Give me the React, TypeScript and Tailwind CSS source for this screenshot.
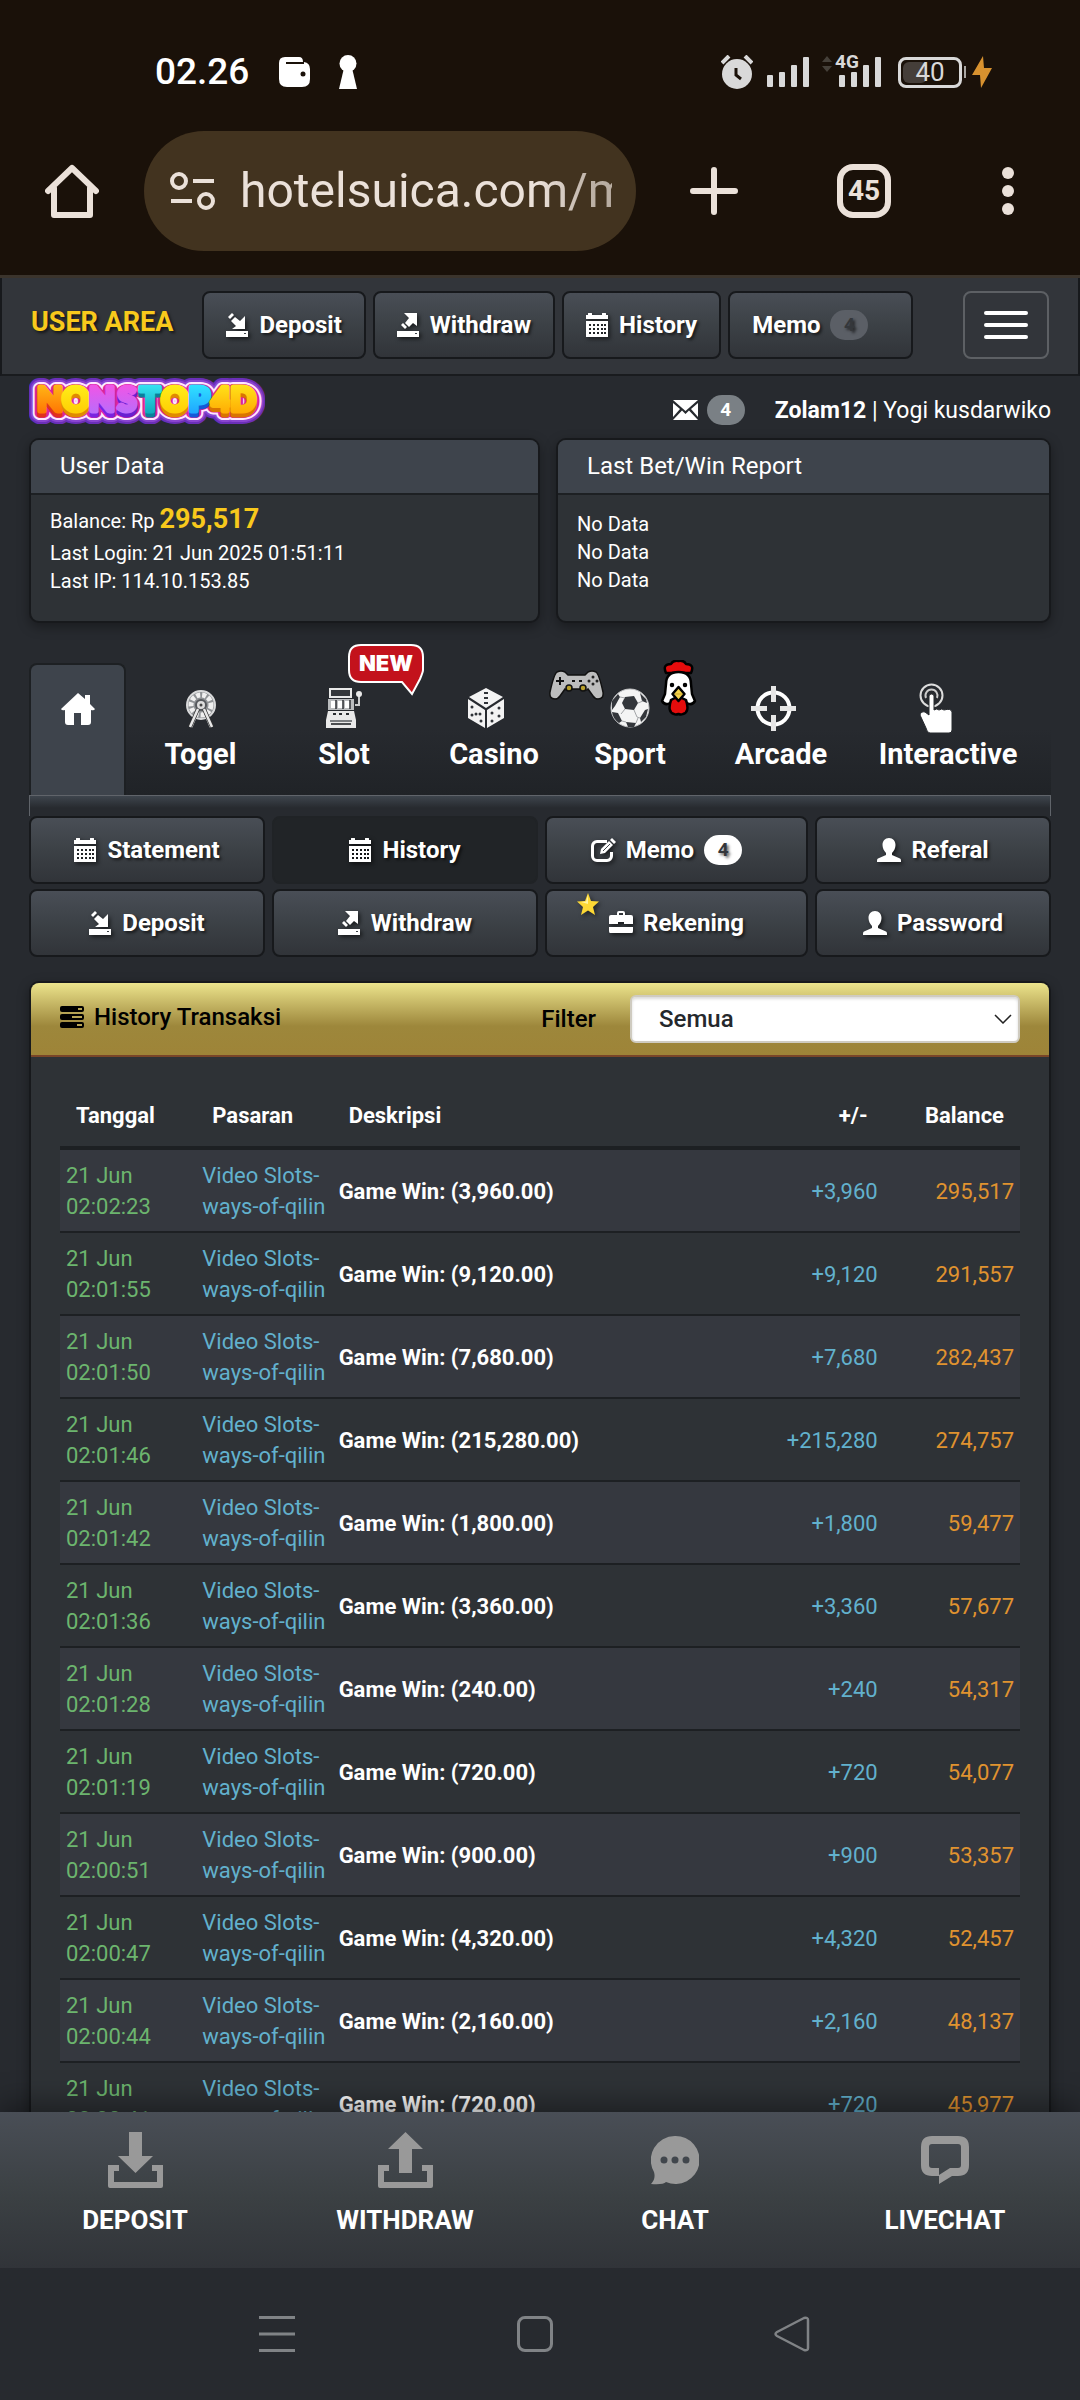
import type { ReactNode } from 'react';
import clsx from 'clsx';

const TRANSACTIONS = [
  { time: '02:02:23', amount: '3,960', balance: '295,517' },
  { time: '02:01:55', amount: '9,120', balance: '291,557' },
  { time: '02:01:50', amount: '7,680', balance: '282,437' },
  { time: '02:01:46', amount: '215,280', balance: '274,757' },
  { time: '02:01:42', amount: '1,800', balance: '59,477' },
  { time: '02:01:36', amount: '3,360', balance: '57,677' },
  { time: '02:01:28', amount: '240', balance: '54,317' },
  { time: '02:01:19', amount: '720', balance: '54,077' },
  { time: '02:00:51', amount: '900', balance: '53,357' },
  { time: '02:00:47', amount: '4,320', balance: '52,457' },
  { time: '02:00:44', amount: '2,160', balance: '48,137' },
  { time: '02:00:41', amount: '720', balance: '45,977' },
];

const LOGO_LETTERS = [
  { char: 'N', x: 20, fill: 'url(#orange)', base: '#e0301e' },
  { char: 'O', x: 46, fill: 'url(#yellow)', base: '#e08a00' },
  { char: 'N', x: 72, fill: 'url(#violet)', base: '#7a22e0' },
  { char: 'S', x: 97, fill: 'url(#violet)', base: '#6a1fd0' },
  { char: 'T', x: 120, fill: 'url(#teal)', base: '#0a7f9a' },
  { char: 'O', x: 145, fill: 'url(#yellow)', base: '#e08a00' },
  { char: 'P', x: 169, fill: 'url(#sky)', base: '#1559d8' },
  { char: '4', x: 191, fill: 'url(#gold)', base: '#d97400' },
  { char: 'D', x: 213, fill: 'url(#gold)', base: '#d97400' },
];

/* ---------- Icons ---------- */

function DepositIcon() {
  return (
    <svg className="w-[22px] h-6 drop-shadow-[2px_2px_2px_rgba(0,0,0,0.6)]" viewBox="0 0 22 24" fill="currentColor">
      <path d="M0 18h22v6H0z" />
      <path d="M18 20h2v1h-2z" fill="#3e4349" />
      <path d="M19 3v13H6l4-3-5-5 4-4 5 4z" />
      <path d="M2 4l4-4 2 2-4 4z" />
    </svg>
  );
}

function WithdrawIcon() {
  return (
    <svg className="w-[22px] h-6 drop-shadow-[2px_2px_2px_rgba(0,0,0,0.6)]" viewBox="0 0 22 24" fill="currentColor">
      <path d="M0 18h22v6H0z" />
      <path d="M18 20h2v1h-2z" fill="#3e4349" />
      <path d="M7 0h13v13l-4-3-4 4-4-4 4-5z" />
      <path d="M4 12l2-2 4 4-2 2z" />
    </svg>
  );
}

function CalendarIcon() {
  return (
    <svg className="w-[22px] h-6 drop-shadow-[2px_2px_2px_rgba(0,0,0,0.6)]" viewBox="0 0 22 24" fill="currentColor">
      <path d="M0 2h2V1a2 2 0 0 1 4 0v1h10V1a2 2 0 0 1 4 0v1h2v4H0z" />
      <path
        fillRule="evenodd"
        d="M0 8h22v16H0zM3 11v2h2v-2zM7 11v2h2v-2zM11 11v2h2v-2zM15 11v2h2v-2zM18 11v2h2v-2zM3 15v2h2v-2zM7 15v2h2v-2zM11 15v2h2v-2zM15 15v2h2v-2zM18 15v2h2v-2zM3 19v2h2v-2zM7 19v2h2v-2zM11 19v2h2v-2zM15 19v2h2v-2zM18 19v2h2v-2z"
      />
    </svg>
  );
}

function EditIcon() {
  return (
    <svg className="w-[25px] h-6 drop-shadow-[2px_2px_2px_rgba(0,0,0,0.6)]" viewBox="0 0 25 24">
      <path d="M16 3.500H6a4.500 4.500 0 0 0-4.500 4.500v10A4.500 4.500 0 0 0 6 22.500h10a4.500 4.500 0 0 0 4.500-4.500v-4" fill="none" stroke="currentColor" strokeWidth="3" />
      <path d="M9 16l1-5 8-8 4 4-8 8zM19 2l2-2 4 4-2 2z" fill="currentColor" />
      <path d="M12 13l7-7" stroke="#43484e" strokeWidth="1" />
    </svg>
  );
}

function UserIcon() {
  return (
    <svg className="w-6 h-6 drop-shadow-[2px_2px_2px_rgba(0,0,0,0.6)]" viewBox="0 0 24 24" fill="currentColor">
      <path d="M12 0c4 0 6.500 3 6.500 7 0 3-1.500 6-3.500 8v2l8 3.500c1 .5 1 1.500 1 3.500H0c0-2 0-3 1-3.500L9 17v-2C7 13 5.500 10 5.500 7c0-4 2.500-7 6.500-7z" />
    </svg>
  );
}

function BriefcaseIcon() {
  return (
    <svg className="w-6 h-6 drop-shadow-[2px_2px_2px_rgba(0,0,0,0.6)]" viewBox="0 0 24 24" fill="currentColor">
      <path d="M8 4V2q0-2 2-2h4q2 0 2 2v2h6q2 0 2 2v7h-9v-2H9v2H0V6q0-2 2-2zM10 2v2h4V2z" fillRule="evenodd" />
      <path d="M0 16h24v4q0 2-1 2H1q-1 0-1-2z" />
    </svg>
  );
}

function TogelIcon() {
  return (
    <svg className="w-[30px] h-[39px]" viewBox="0 0 30 39" fill="none">
      <path d="M14 17 5 38M16 17l9 21" stroke="#d5d7d9" strokeWidth="3" />
      <circle cx="15" cy="16" r="14" fill="#8f9295" stroke="#d9dadb" strokeWidth="2" />
      <circle cx="15" cy="16" r="10" stroke="#f0f0f0" strokeWidth="5" strokeDasharray="4 2" />
      <circle cx="15" cy="16" r="5" fill="#ddd" stroke="#55585c" strokeWidth="2" />
      <circle cx="15" cy="16" r="1.500" fill="#444" />
      <path d="M12 20 4 38M18 20l8 18" stroke="#333" strokeWidth="4" />
      <path d="M12 20 4 38M18 20l8 18" stroke="#e8e8e8" strokeWidth="2.500" />
    </svg>
  );
}

function SlotIcon() {
  return (
    <svg className="w-9 h-10" viewBox="0 0 36 40" fill="#e9e9e9">
      <path d="M3 0h23v10H3z" />
      <path d="M5 2h19v6H5z" fill="#34373b" />
      <path d="M2 11h26v11H2z" fill="#b9bbbd" />
      <path d="M5 13h5v7H5zM12 13h5v7h-5zM19 13h5v7h-5z" fill="#fff" />
      <path d="M10 12v9M17 12v9M24 12v9" stroke="#2e3135" strokeWidth="1.500" />
      <path d="M2 23h26l2 9v8H0v-8z" />
      <path d="M7 25h3v2H7zM13 25h3v2h-3zM20 25h3v2h-3z" fill="#292c30" />
      <path d="M4 32h22v2H4z" fill="#7b7e81" />
      <path d="M5 35h20v2H5z" fill="#4a4d50" />
      <path d="M29 17h4V8" fill="none" stroke="#c9cacb" strokeWidth="2" />
      <circle cx="33" cy="6" r="3" />
    </svg>
  );
}

function DiceIcon() {
  return (
    <svg className="w-9 h-10" viewBox="0 0 36 40" fill="#f3f3f3">
      <path d="M18 0l17 9-17 11L1 9z" />
      <path d="M0 11l17 11v18L0 30zM36 11L19 22v18l17-10z" />
      <g fill="#303338">
        <rect x="16" y="4" width="4" height="2" />
        <rect x="16" y="9" width="4" height="2" />
        <rect x="16" y="14" width="4" height="2" />
        <circle cx="4" cy="19" r="1.500" />
        <circle cx="4" cy="27" r="1.500" />
        <circle cx="8" cy="26" r="1.500" />
        <circle cx="12" cy="26" r="1.500" />
        <circle cx="13" cy="33" r="1.500" />
        <circle cx="24" cy="25" r="1.500" />
        <circle cx="31" cy="20" r="1.500" />
        <circle cx="24" cy="33" r="1.500" />
        <circle cx="31" cy="28" r="1.500" />
      </g>
    </svg>
  );
}

function BallIcon() {
  return (
    <svg className="w-10 h-10" viewBox="0 0 40 40">
      <circle cx="20" cy="20" r="19" fill="#f4f4f4" stroke="#c5c6c8" />
      <g fill="#33363b">
        <path d="M15 9l9-1 4 7-4 7-9-1-3-6z" />
        <path d="M2 13l6-7 2 3-5 9-3 4zM30 5l6 6 1 4-5-2zM2 24l6 1 4 8-3 2q-6-4-7-11zM16 34l10 1-2 4h-6zM38 21l-2 8-5 5-1-4 5-8z" />
      </g>
      <path d="M10 9l5 1M28 15l5-2M24 22l3 7 3 1M15 21l-4 5M26 35l2-5M12 33l4 1" stroke="#a2a4a7" strokeWidth="1" fill="none" />
    </svg>
  );
}

function GamepadIcon() {
  return (
    <svg className="w-[57px] h-[30px]" viewBox="0 0 57 30">
      <path
        d="M9 2q4-2 8 0l3 3h17l3-3q4-2 8 0 3 2 7 20 1 7-5 7-3 0-5-3l-5-7q-3 3-6 0H23q-3 3-6 0l-5 7q-2 3-5 3-6 0-5-7Q6 4 9 2z"
        fill="#bdbdbd"
        stroke="#111"
        strokeWidth="1.500"
      />
      <path d="M12 7v8M8 11h8" stroke="#111" strokeWidth="2" />
      <path d="M24 11h3M31 11h3" stroke="#111" strokeWidth="2" />
      <g fill="#222">
        <circle cx="45" cy="7" r="1.500" />
        <circle cx="45" cy="14" r="1.500" />
        <circle cx="41" cy="11" r="1.500" />
        <circle cx="49" cy="11" r="1.500" />
      </g>
      <circle cx="21" cy="18" r="3" fill="#b8a02c" stroke="#111" strokeWidth="1.500" />
      <circle cx="35" cy="18" r="3" fill="#b8a02c" stroke="#111" strokeWidth="1.500" />
    </svg>
  );
}

function RoosterIcon() {
  return (
    <svg className="w-[37px] h-14" viewBox="0 0 37 56" stroke="#000" strokeWidth="2.500" strokeLinejoin="round">
      <path d="M6 13q-4-9 5-9 2-4 7.500-3Q24 0 26 4q9 0 5 9z" fill="#e50c0c" />
      <path d="M6 24q0-12 12.500-12T31 24l1 10 3 7q-3 5-8 2H10q-5 3-8-2l3-7z" fill="#fff" />
      <path d="M11 40q7-5 15 0 4 12-3 14-2 1-4.500 0-3 1-4.500 0-7-2-3-14z" fill="#e50c0c" />
      <path d="M18.500 27l6 7-6 7-6-7z" fill="#f5d34a" />
      <path d="M15 34h7" stroke="#caa42c" strokeWidth="1" />
      <circle cx="12" cy="25" r="1" />
      <circle cx="25" cy="25" r="1" />
    </svg>
  );
}

function CrosshairIcon() {
  return (
    <svg className="w-[45px] h-[45px]" viewBox="0 0 45 45" fill="none">
      <circle cx="22.500" cy="22.500" r="16" stroke="#fff" strokeWidth="4" />
      <path d="M22.500 0v16M22.500 29v16M0 22.500h16M29 22.500h16" stroke="#e6e6e6" strokeWidth="5" />
    </svg>
  );
}

function TapIcon() {
  return (
    <svg className="w-[34px] h-[50px]" viewBox="0 0 34 50">
      <circle cx="12.500" cy="12.500" r="11" fill="none" stroke="#ddd" strokeWidth="2" />
      <path d="M7 15a6 6 0 1 1 11 0" fill="none" stroke="#ccc" strokeWidth="2" />
      <path d="M10 13q0-2 2.500-2t2.500 2v14q3-2 5 0 3-2 5 0 7-2 8 2v18q0 3-3 3H11q-3 0-4-5L1 32q1-4 5-3l4 3z" fill="#fff" stroke="#272a2f" strokeWidth="1" />
    </svg>
  );
}

function SignalBars() {
  return (
    <svg className="w-[43px] h-[30px]" viewBox="0 0 43 30" fill="#d9d9d9">
      <rect x="0" y="18" width="6" height="12" rx="1" />
      <rect x="12" y="15" width="6" height="15" rx="1" />
      <rect x="24" y="8" width="6" height="22" rx="1" />
      <rect x="36" y="0" width="6" height="30" rx="1" />
    </svg>
  );
}

function Logo() {
  return (
    <svg className="w-[236px] h-[51px] shrink-0" viewBox="-1 0 236 51" role="img" aria-label="NONSTOP4D">
      <defs>
        <linearGradient id="orange" x1="0" y1="0" x2="0" y2="1">
          <stop offset="0" stopColor="#ffc61a" />
          <stop offset="1" stopColor="#ff6a00" />
        </linearGradient>
        <linearGradient id="yellow" x1="0" y1="0" x2="0" y2="1">
          <stop offset="0" stopColor="#fff61e" />
          <stop offset="1" stopColor="#ffc800" />
        </linearGradient>
        <linearGradient id="violet" x1="0" y1="0" x2="0" y2="1">
          <stop offset="0" stopColor="#ff4fe0" />
          <stop offset="1" stopColor="#b070ff" />
        </linearGradient>
        <linearGradient id="teal" x1="0" y1="0" x2="0" y2="1">
          <stop offset="0" stopColor="#3ff0ff" />
          <stop offset="1" stopColor="#0aa0b4" />
        </linearGradient>
        <linearGradient id="sky" x1="0" y1="0" x2="0" y2="1">
          <stop offset="0" stopColor="#35f0ff" />
          <stop offset="1" stopColor="#1c9cff" />
        </linearGradient>
        <linearGradient id="gold" x1="0" y1="0" x2="0" y2="1">
          <stop offset="0" stopColor="#fff01e" />
          <stop offset="1" stopColor="#ffa200" />
        </linearGradient>
      </defs>
      <g fontFamily="Lato" fontWeight="900" fontSize="33" textAnchor="middle" strokeLinejoin="round">
        {[
          { color: '#6b2fb8', width: 22 },
          { color: '#8a45d0', width: 18 },
          { color: '#ffe6ff', width: 14 },
          { color: '#d9259b', width: 10 },
        ].map((layer) => (
          <g key={layer.color} fill={layer.color} stroke={layer.color} strokeWidth={layer.width} aria-hidden="true">
            {LOGO_LETTERS.map((l) => (
              <text key={l.x} x={l.x} y="37">{l.char}</text>
            ))}
          </g>
        ))}
        {LOGO_LETTERS.map((l) => (
          <g key={l.x} strokeWidth="5">
            <text x={l.x} y="39" fill={l.base} stroke={l.base} aria-hidden="true">{l.char}</text>
            <text x={l.x} y="35" fill={l.fill} stroke={l.fill}>{l.char}</text>
          </g>
        ))}
      </g>
    </svg>
  );
}

/* ---------- Browser chrome ---------- */

function StatusBar() {
  return (
    <div className="flex items-center h-9 pl-[155px] pr-[88px] text-white">
      <span className="text-[37px] leading-9 font-medium">02.26</span>
      <svg className="ml-[30px] w-8 h-[30px]" viewBox="0 0 32 30">
        <path d="M6 0h14q4 0 4 5h1q6 1 6 7v10q0 8-8 8H8q-8 0-8-8V6q0-6 6-6z" fill="#fff" />
        <path d="M7 6h18" stroke="#1a1109" strokeWidth="2" />
        <circle cx="24" cy="17" r="2.500" fill="#1a1109" />
      </svg>
      <svg className="ml-7 w-[18px] h-[34px]" viewBox="0 0 18 34" fill="#fff">
        <circle cx="9" cy="8.500" r="8.500" />
        <path d="M5 13h8l5 21H0z" />
      </svg>
      <div className="ml-auto flex items-center">
        <svg className="w-8 h-[34px]" viewBox="0 0 32 34">
          <circle cx="16" cy="19" r="15" fill="#d9d9d9" />
          <path d="M1 8l7-7M31 8l-7-7" stroke="#d9d9d9" strokeWidth="4" />
          <path d="M15 13v7l5 4" fill="none" stroke="#1a1109" strokeWidth="3" />
        </svg>
        <span className="ml-3.5"><SignalBars /></span>
        <svg className="ml-3 mb-4 w-[10px] h-4" viewBox="0 0 10 16" fill="#454039">
          <path d="M0 6l5-6 5 6zM0 10l5 6 5-6z" />
        </svg>
        <div className="relative ml-[7px]">
          <SignalBars />
          <span className="absolute -top-1 -left-1 bg-[#1a1109] text-[19px] leading-[18px] font-bold text-[#d9d9d9]">4G</span>
        </div>
        <div className="ml-4 flex items-center">
          <div className="relative flex items-center justify-center w-16 h-[31px] rounded-lg border-3 border-[#d9d9d9]">
            <div className="absolute inset-y-0.5 left-0.5 w-6 rounded-md bg-[#453e39]" />
            <span className="relative text-[26px] leading-6 text-[#d9d9d9]">40</span>
          </div>
          <span className="ml-0.5 w-0.5 h-3 bg-[#a9a6a2]" />
        </div>
        <svg className="ml-1.5 w-5 h-8" viewBox="0 0 20 32" fill="#d8922f">
          <path d="M11 0L0 19h8l1 13L20 12h-8z" />
        </svg>
      </div>
    </div>
  );
}

function BrowserToolbar() {
  return (
    <div className="flex items-center h-[120px] mt-[41px] pl-[45px] pr-[66px] text-[#ebe1d9]">
      <button aria-label="Home">
        <svg className="w-[54px] h-[54px]" viewBox="0 0 54 54" fill="none" stroke="currentColor" strokeWidth="6" strokeLinejoin="round" strokeLinecap="round">
          <path d="M3 27L27 4l24 23M9 24v27h36V24" />
        </svg>
      </button>
      <label className="ml-[45px] flex flex-1 min-w-0 items-center h-full pl-[26px] pr-6 rounded-full bg-[#42331f]">
        <svg className="shrink-0 w-[46px] h-[38px]" viewBox="0 0 46 38" fill="none" stroke="currentColor" strokeWidth="4">
          <circle cx="9" cy="9" r="7" />
          <path d="M23 9h21M1 29h21" />
          <circle cx="36" cy="29" r="7" />
        </svg>
        <input
          aria-label="Address"
          readOnly
          value="hotelsuica.com/member"
          className="ml-6 flex-1 min-w-0 text-[48px] leading-[60px] outline-none [mask-image:linear-gradient(to_right,black_80%,rgba(0,0,0,0.7)_96%)]"
        />
      </label>
      <button aria-label="New tab" className="ml-[54px]">
        <svg className="w-12 h-12" viewBox="0 0 48 48" stroke="currentColor" strokeWidth="6" strokeLinecap="round">
          <path d="M24 3v42M3 24h42" />
        </svg>
      </button>
      <button className="ml-[99px] w-[54px] h-[54px] rounded-2xl border-6 border-current text-[28px] leading-7 font-bold">45</button>
      <button aria-label="Menu" className="ml-[111px] flex flex-col gap-1.5">
        <span className="size-3 rounded-full bg-current" />
        <span className="size-3 rounded-full bg-current" />
        <span className="size-3 rounded-full bg-current" />
      </button>
    </div>
  );
}

/* ---------- Page ---------- */

function MenuButton({ children, active, className }: { children: ReactNode; active?: boolean; className?: string }) {
  return (
    <button
      className={clsx(
        'relative flex items-center h-[68px] rounded-lg border-2 text-[24px] leading-[30px] font-bold text-white [text-shadow:2px_2px_3px_rgba(0,0,0,0.6)]',
        active ? 'border-[#202326] bg-[#212427]' : 'border-[#17191c] bg-linear-to-b from-[#494e56] via-[#3c4146] to-[#313439]',
        className,
      )}
    >
      {children}
    </button>
  );
}

function Badge({ children, className }: { children: ReactNode; className?: string }) {
  return (
    <span className={clsx('flex items-center justify-center w-[38px] h-[30px] rounded-full text-[19px] leading-[30px] font-bold', className)}>
      {children}
    </span>
  );
}

function TopNav() {
  return (
    <nav className="flex items-center gap-[7px] pt-[13px] pb-[15px] pl-[29px] pr-[29px] border-x-2 border-b-2 border-x-[#17191c] border-b-[#191b1e] bg-[#32353a]">
      <a href="#" className="mr-[22px] mb-1.5 text-[27px] leading-8 font-bold text-[#f8c91c] [text-shadow:2px_2px_3px_rgba(0,0,0,0.6)]">
        USER AREA
      </a>
      <MenuButton className="px-[22px] gap-[11px]"><DepositIcon />Deposit</MenuButton>
      <MenuButton className="px-[22px] gap-[11px]"><WithdrawIcon />Withdraw</MenuButton>
      <MenuButton className="px-[22px] gap-[11px]"><CalendarIcon />History</MenuButton>
      <MenuButton className="pl-[22px] pr-[43px] gap-2.5">
        Memo
        <Badge className="bg-[#5b5f66] text-[#34373b]">4</Badge>
      </MenuButton>
      <button aria-label="Toggle navigation" className="ml-auto flex flex-col items-center justify-center gap-2 w-[86px] h-[68px] rounded-lg border-2 border-[#5d6064]">
        <span className="w-11 h-1 rounded-full bg-white" />
        <span className="w-11 h-1 rounded-full bg-white" />
        <span className="w-11 h-1 rounded-full bg-white" />
      </button>
    </nav>
  );
}

function InfoCard({ title, children }: { title: string; children: ReactNode }) {
  return (
    <section className="h-[185px] rounded-[10px] border-2 border-[#17191c] bg-[#2e3236] shadow-[0_4px_12px_rgba(0,0,0,0.35)] overflow-hidden">
      <h2 className="h-[55px] px-[29px] border-b-2 border-[#1d2023] bg-[#3e444c] text-[24px] leading-[52px]">{title}</h2>
      {children}
    </section>
  );
}

function GameTab({ label, children }: { label: string; children: ReactNode }) {
  return (
    <a href="#" className="flex flex-col items-center h-full">
      <span className="relative flex items-center justify-center mt-[19px] h-[52px]">{children}</span>
      <span className="mt-1 text-[29px] leading-8 font-bold">{label}</span>
    </a>
  );
}

function GameTabs() {
  return (
    <nav className="mt-10">
      <div className="grid grid-cols-[97fr_149fr_138fr_162fr_110fr_192fr_142fr_32fr] h-[132px] bg-linear-to-b from-[#272a2f] from-50% to-[#202327]">
        <a href="#" aria-label="Home" className="flex justify-center pt-7 rounded-t-lg border-2 border-b-0 border-[#1d2023] bg-[#3e444c]">
          <svg className="w-[34px] h-8" viewBox="0 0 34 32" fill="#fff">
            <path d="M17 0l7 6V2h5v9l5 5q-1 2-4 1v12q0 3-3 3h-7V20h-7v12H7q-3 0-3-3V17q-3 1-4-1z" />
          </svg>
        </a>
        <GameTab label="Togel"><TogelIcon /></GameTab>
        <GameTab label="Slot">
          <SlotIcon />
          <span className="absolute left-[22px] -top-[38px] w-[76px] h-[52px]">
            <svg className="absolute inset-0" viewBox="0 0 76 52">
              <path d="M13 1h50q12 0 12 12v13q0 2-3 9L64 50 54 38H13Q1 38 1 26V13Q1 1 13 1z" fill="#c3121c" stroke="#fff" strokeWidth="2" />
            </svg>
            <span className="relative block text-center font-[Inter] text-[22px] leading-[38px] font-black">NEW</span>
          </span>
        </GameTab>
        <GameTab label="Casino"><span className="mr-4"><DiceIcon /></span></GameTab>
        <GameTab label="Sport">
          <BallIcon />
          <span className="absolute right-[45px] -top-3"><GamepadIcon /></span>
          <span className="absolute left-[50px] -top-[22px]"><RoosterIcon /></span>
        </GameTab>
        <GameTab label="Arcade"><span className="mr-4"><CrosshairIcon /></span></GameTab>
        <GameTab label="Interactive"><span className="mr-6"><TapIcon /></span></GameTab>
      </div>
      <div className="h-[21px] border border-b-0 border-[#60646a] bg-linear-to-b from-[#3e454d] to-[#272a2f] to-60%" />
    </nav>
  );
}

function AccountMenu() {
  return (
    <div className="grid grid-cols-[236fr_266fr_263fr_236fr] gap-x-[7px] gap-y-[5px]">
      <MenuButton className="justify-center gap-[11px]"><CalendarIcon />Statement</MenuButton>
      <MenuButton active className="justify-center gap-[11px]"><CalendarIcon />History</MenuButton>
      <MenuButton className="justify-center gap-2.5 pr-5">
        <EditIcon />Memo
        <Badge className="bg-white text-[#34373b]">4</Badge>
      </MenuButton>
      <MenuButton className="justify-center gap-2.5"><UserIcon />Referal</MenuButton>
      <MenuButton className="justify-center gap-[11px]"><DepositIcon />Deposit</MenuButton>
      <MenuButton className="justify-center gap-[11px]"><WithdrawIcon />Withdraw</MenuButton>
      <MenuButton className="justify-center gap-2.5">
        <svg className="absolute left-[30px] top-0.5 w-[22px] h-[22px] drop-shadow-[2px_2px_2px_rgba(0,0,0,0.5)]" viewBox="0 0 22 22" fill="#fdd835">
          <path d="M11 0l3 8 8 .4-6 5.600L18 22l-7-4.500L4 22l2-8L0 8.400 8 8z" />
          <path d="M11 2v9L4 9l5-.5z" fill="#fff3a0" />
        </svg>
        <BriefcaseIcon />Rekening
      </MenuButton>
      <MenuButton className="justify-center gap-2.5"><UserIcon />Password</MenuButton>
    </div>
  );
}

function HistoryPanel() {
  return (
    <section className="mt-6 rounded-t-[10px] border-2 border-b-0 border-[#17191c] bg-[#2e3236] shadow-[0_4px_12px_rgba(0,0,0,0.35)]">
      <header className="flex items-center h-[74px] px-[29px] rounded-t-lg border-b-2 border-[#7a4528] bg-linear-to-b from-[#ece48c] via-[#9d873b] via-60% to-[#9e8438] text-[24px] leading-[30px] font-medium text-black">
        <svg className="mb-1 w-6 h-[22px]" viewBox="0 0 24 22">
          <rect width="24" height="6" rx="2" />
          <rect y="8" width="24" height="6" rx="2" />
          <rect y="16" width="24" height="6" rx="2" />
          <path d="M18 2h4v2h-4zM12 10h10v2H12zM17 18h5v2h-5z" fill="#b7a455" />
        </svg>
        <h2 className="ml-2.5 mb-1">History Transaksi</h2>
        <label htmlFor="filter" className="ml-auto">Filter</label>
        <div className="relative ml-[34px] w-[390px]">
          <select id="filter" className="appearance-none w-full h-12 px-[27px] rounded-md border-2 border-[#cfcbc0] bg-white font-medium text-[#25282c] shadow-[inset_0_2px_3px_rgba(0,0,0,0.15)]">
            <option>Semua</option>
          </select>
          <svg className="pointer-events-none absolute right-2 top-[19px] w-[18px] h-[10px]" viewBox="0 0 18 10" fill="none" stroke="#222" strokeWidth="1.500">
            <path d="M1 1l8 8 8-8" />
          </svg>
        </div>
      </header>

      <div className="px-[29px] pt-10">
        <table className="w-full table-fixed text-left text-[22px] leading-[31px]">
          <colgroup>
            <col className="w-[14.2%]" />
            <col className="w-[14.2%]" />
            <col />
            <col className="w-[14.2%]" />
            <col className="w-[14.2%]" />
          </colgroup>
          <thead className="border-b-4 border-[#1d2023]">
            <tr className="h-[51px] [&>th]:px-4 [&>th]:pb-3 [&>th]:font-bold">
              <th>Tanggal</th>
              <th>Pasaran</th>
              <th>Deskripsi</th>
              <th className="text-right">+/-</th>
              <th className="text-right">Balance</th>
            </tr>
          </thead>
          <tbody>
            {TRANSACTIONS.map((t) => (
              <tr key={t.time} className="border-b-2 border-[#1d2023] odd:bg-[#35383f] [&>td]:px-1.5 [&>td]:pt-[10px] [&>td]:pb-[9px]">
                <td className="text-[#6cb56e]">21 Jun<br />{t.time}</td>
                <td className="text-[#62b1cd] whitespace-nowrap">Video Slots-<br />ways-of-qilin</td>
                <td className="font-bold">Game Win: ({t.amount}.00)</td>
                <td className="text-right text-[#62b1cd]">+{t.amount}</td>
                <td className="text-right text-[#e0932f]">{t.balance}</td>
              </tr>
            ))}
          </tbody>
        </table>
      </div>
    </section>
  );
}

function BottomItem({ label, children }: { label: string; children: ReactNode }) {
  return (
    <a href="#" className="flex flex-col items-center pt-5 text-[#999]">
      {children}
      <span className="mt-4 text-[26px] leading-8 font-bold text-white">{label}</span>
    </a>
  );
}

function BottomBar() {
  return (
    <nav className="relative grid grid-cols-4 h-[156px] bg-linear-to-b from-[#494e56] via-[#3b4043] via-55% to-[#313439] shadow-[0_-8px_28px_rgba(0,0,0,0.4)]">
      <BottomItem label="DEPOSIT">
        <svg className="w-[55px] h-[56px]" viewBox="0 0 55 56" fill="currentColor">
          <path d="M21 0h13v24h11L27.500 41 10 24h11z" />
          <path d="M0 33h11v6H6v11h43V39h-5v-6h11v21q0 2-2 2H2q-2 0-2-2z" />
        </svg>
      </BottomItem>
      <BottomItem label="WITHDRAW">
        <svg className="w-[55px] h-[56px]" viewBox="0 0 55 56" fill="currentColor">
          <path d="M21 41h13V17h11L27.500 0 10 17h11z" />
          <path d="M0 33h11v6H6v11h43V39h-5v-6h11v21q0 2-2 2H2q-2 0-2-2z" />
        </svg>
      </BottomItem>
      <BottomItem label="CHAT">
        <svg className="w-12 h-[56px]" viewBox="0 -4 48 56">
          <path d="M24 0a24 24 0 1 1-9 46q-3 3-15 2 5-5 3-12A24 24 0 0 1 24 0z" fill="currentColor" />
          <g fill="#41464c">
            <circle cx="13" cy="24" r="3.500" />
            <circle cx="24" cy="24" r="3.500" />
            <circle cx="35" cy="24" r="3.500" />
          </g>
        </svg>
      </BottomItem>
      <BottomItem label="LIVECHAT">
        <svg className="w-12 h-[56px]" viewBox="0 -4 48 56" fill="currentColor">
          <path fillRule="evenodd" d="M11 0h26q11 0 11 11v18q0 11-11 11h-6L18 48v-8h-7Q0 40 0 29V11Q0 0 11 0zM11 8q-3 0-3 3v18q0 3 3 3h7v7l11-7h8q3 0 3-3V11q0-3-3-3z" />
        </svg>
      </BottomItem>
    </nav>
  );
}

function SystemNav() {
  return (
    <div className="relative flex items-center justify-between h-[132px] pl-[24%] pr-[25%] bg-[#272a2f] text-[#808386]">
      <button aria-label="Recent apps">
        <svg className="w-9 h-9" viewBox="0 0 36 36" stroke="currentColor" strokeWidth="3">
          <path d="M0 1.500h36M0 18h36M0 34.500h36" />
        </svg>
      </button>
      <button aria-label="Home screen" className="w-9 h-9 rounded-lg border-3 border-current" />
      <button aria-label="Back">
        <svg className="w-9 h-9" viewBox="0 0 36 36" fill="none" stroke="currentColor" strokeWidth="2.500" strokeLinejoin="round">
          <path d="M3 16L30 2q4-1 4 2v28q0 3-4 2L3 20q-3-2 0-4z" />
        </svg>
      </button>
    </div>
  );
}

export default function App() {
  return (
    <div className="flex flex-col h-screen overflow-hidden bg-[#272a2f] font-[Roboto,sans-serif] text-white">
      <div className="shrink-0 pt-[54px] pb-6 border-b-3 border-[#3b342c] bg-[#1a1109]">
        <StatusBar />
        <BrowserToolbar />
      </div>

      <main className="flex-1 min-h-0 overflow-hidden">
        <TopNav />
        <div className="px-[29px]">
          <div className="flex items-start justify-between h-[62px]">
            <Logo />
            <div className="mt-[18px] flex items-center text-[23px] leading-[30px]">
              <svg className="w-[25px] h-5" viewBox="0 0 25 20" fill="#fff">
                <path d="M0 0h25L12.500 11zM0 3l7 6-7 8zM25 3l-7 6 7 8zM0 20l9-9.500 3.500 3.500 3.500-3.500L25 20z" />
              </svg>
              <Badge className="ml-[9px] bg-[#7a8085]">4</Badge>
              <span className="ml-[30px] pt-0.5"><b>Zolam12</b> | Yogi kusdarwiko</span>
            </div>
          </div>

          <div className="grid grid-cols-[511fr_495fr] gap-4">
            <InfoCard title="User Data">
              <div className="px-[19px] pt-2 text-[20px] leading-7">
                <p className="leading-9">Balance: Rp <b className="text-[27px] leading-8 text-[#f8c91c]">295,517</b></p>
                <p>Last Login: 21 Jun 2025 01:51:11</p>
                <p>Last IP: 114.10.153.85</p>
              </div>
            </InfoCard>
            <InfoCard title="Last Bet/Win Report">
              <div className="px-[19px] pt-[15px] text-[20px] leading-7">
                <p>No Data</p>
                <p>No Data</p>
                <p>No Data</p>
              </div>
            </InfoCard>
          </div>

          <GameTabs />
          <AccountMenu />
          <HistoryPanel />
        </div>
      </main>

      <div className="shrink-0">
        <BottomBar />
        <SystemNav />
      </div>
    </div>
  );
}
